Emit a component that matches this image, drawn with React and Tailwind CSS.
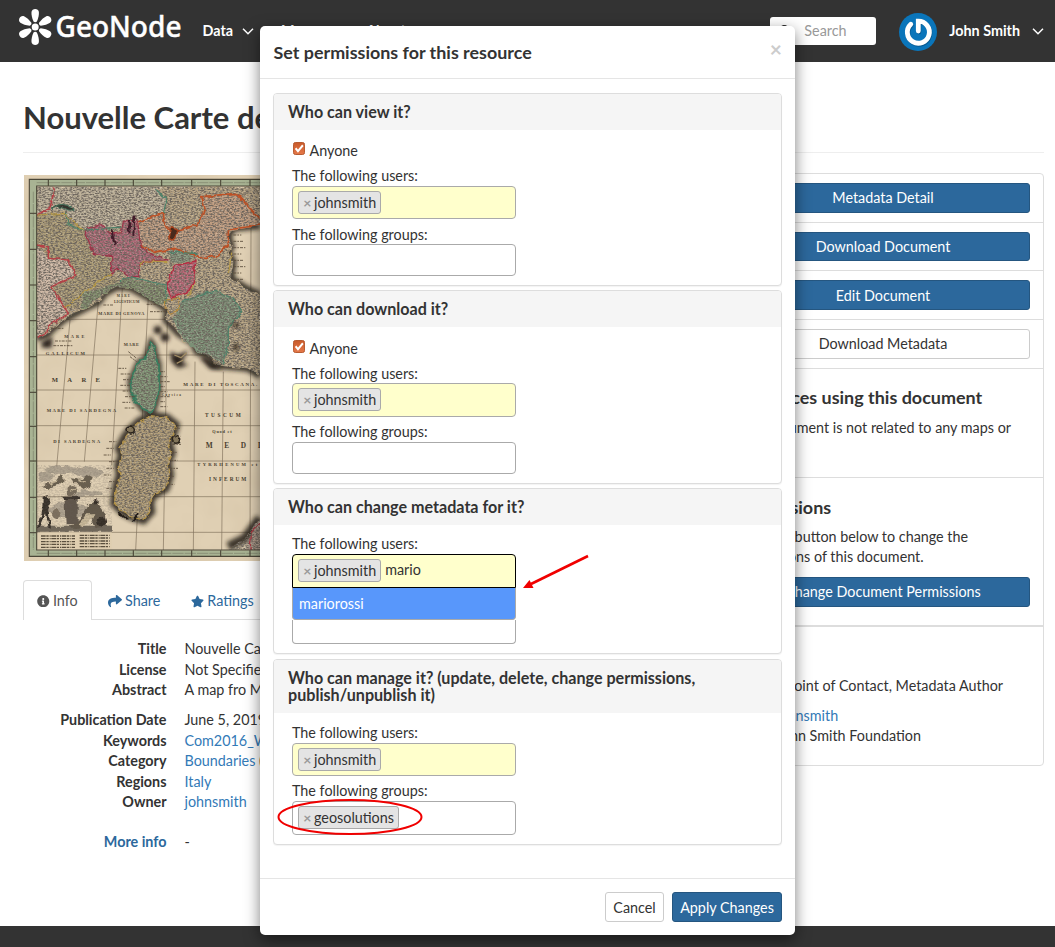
import React from "react";
import { FaInfoCircle, FaShare, FaStar, FaSearch } from "react-icons/fa";

const Chevron = () => (
  <svg className="h-[7px] w-[12px]" viewBox="0 0 12 7" fill="none" stroke="#fff" strokeWidth="1.5">
    <path d="M1 .8 6 5.8 11 .8" />
  </svg>
);

function Logo() {
  return (
    <svg className="ml-[17px] h-[40px] w-[170px] shrink-0" viewBox="17 7 170 40" fill="#fff">
      {[0, 60, 120, 180, 240, 300].map((a) => (
        <path
          key={a}
          transform={`rotate(${a} 35.2 27)`}
          d="M33.5 21.6C32 18 31.3 15 31.5 12C31.9 8 38.5 8 38.9 12C39.1 15 38.4 18 36.9 21.6C36 22.6 34.4 22.6 33.5 21.6Z"
        />
      ))}
      <circle cx="35.2" cy="27" r="3.5" />
      <text x="55.5" y="37.3" fontFamily="'Noto Sans', sans-serif" fontWeight="500" stroke="#fff" strokeWidth=".4" fontSize="28.5" textLength="126" lengthAdjust="spacingAndGlyphs">
        GeoNode
      </text>
    </svg>
  );
}

function Avatar() {
  return (
    <svg className="h-[38px] w-[38px]" viewBox="0 0 38 38" fill="none">
      <circle cx="19" cy="19" r="19" fill="#0a75ba" />
      <g strokeLinecap="round" strokeWidth="4.8">
        <path d="M11.8 11.2A11 11 0 1 0 19.3 8.2V18" stroke="#075a92" transform="translate(.6 1)" />
        <path d="M11.8 11.2A11 11 0 1 0 19.3 8.2V18" stroke="#fff" />
      </g>
    </svg>
  );
}

const NORTH =
  "M65 65H735V182L655 190 640 212 650 245 640 262 655 290 648 340 690 368 735 390V632L700 610 640 605 600 600 585 575 545 560 535 535 505 528 490 505 475 480 452 465 458 435 420 410 385 390 345 368 305 366 270 385 250 412 215 428 185 438 150 462 115 490 95 510 65 520Z";
const CORSICA =
  "M408 530 418 545 420 562 432 600 432 650 430 690 420 725 408 745 385 735 365 712 352 685 345 650 360 615 372 590 392 580Z";
const SARDINIA =
  "M345 795 375 768 410 752 455 758 482 780 475 805 460 830 470 865 458 890 465 930 452 970 415 990 405 1010 408 1040 385 1065 350 1055 322 1040 298 1015 305 960 315 930 310 900 322 870 312 850 330 815Z";
const VERT = [
  "M165 465 125 905", "M250 410 208 890", "M322 370 290 900", "M400 395 362 1155",
  "M457 460 445 1155", "M540 590 535 1155", "M625 620 620 1155", "M708 190 705 1155",
];
const LABELS = [
  [305, 396, 10, 40, "MARE"], [297, 414, 11, 76, "LIGUSTICUM"], [250, 450, 13, 138, "MARE DI GENOVA"],
  [148, 518, 13, 60, "MARE"], [92, 571, 14, 118, "GALLICUM"], [326, 542, 13, 46, "MARE"],
  [110, 651, 20, 145, "MARE"], [95, 740, 14, 208, "MARE DI SARDEGNA"], [115, 834, 14, 140, "DI SARDEGNA"],
  [505, 664, 15, 222, "MARE DI TOSCANA."], [570, 756, 16, 107, "TUSCUM"], [592, 804, 13, 58, "Quod et"],
  [572, 850, 22, 165, "MEDI"], [547, 902, 14, 180, "TYRRHENUM et"], [582, 947, 16, 112, "INFERUM"],
  [440, 692, 10, 58, "Corsica"],
];

function MapImage() {
  return (
    <svg className="block h-[386px] w-[720px]" viewBox="27 30 2160 1158">
      <defs>
        <filter id="ink" x="0" y="0" width="100%" height="100%">
          <feTurbulence type="fractalNoise" baseFrequency="0.14 0.24" numOctaves="2" seed="8" />
          <feColorMatrix values="0 0 0 0 .14  0 0 0 0 .12  0 0 0 0 .1  3.4 0 0 0 -1.3" />
        </filter>
        <filter id="fleck" x="0" y="0" width="100%" height="100%">
          <feTurbulence type="fractalNoise" baseFrequency="0.16 0.26" numOctaves="2" seed="21" />
          <feColorMatrix values="0 0 0 0 .9  0 0 0 0 .84  0 0 0 0 .74  0 3.2 0 0 -1.6" />
        </filter>
        <filter id="paper" x="0" y="0" width="100%" height="100%">
          <feTurbulence type="fractalNoise" baseFrequency="0.008" numOctaves="3" seed="3" />
          <feColorMatrix values="0 0 0 0 .5  0 0 0 0 .4  0 0 0 0 .26  .4 0 0 0 -.17" />
        </filter>
        <filter id="rough" x="-10%" y="-10%" width="120%" height="120%">
          <feTurbulence type="fractalNoise" baseFrequency="0.05" numOctaves="2" result="n" />
          <feDisplacementMap in="SourceGraphic" in2="n" scale="16" xChannelSelector="R" yChannelSelector="G" />
        </filter>
        <filter id="soft" x="-20%" y="-20%" width="140%" height="140%">
          <feGaussianBlur stdDeviation="6" />
        </filter>
        <clipPath id="land">
          <path d={NORTH} /><path d={CORSICA} /><path d={SARDINIA} />
          <path d="M720 1075 735 1060V1155H640L665 1135 690 1120Z" />
        </clipPath>
        <clipPath id="sheet"><rect x="65" y="63" width="690" height="1092" /></clipPath>
      </defs>
      <rect x="27" y="30" width="2160" height="1158" fill="#e0d0b4" />
      <rect x="27" y="30" width="760" height="1158" filter="url(#paper)" />
      <g stroke="#80715c" strokeWidth="2" fill="none">
        {VERT.map((d) => <path key={d} d={d} />)}
        {[463, 570, 675, 782, 888, 995, 1102].map((y) => <path key={y} d={`M65 ${y}H760`} />)}
      </g>
      <g clipPath="url(#sheet)">
        <g filter="url(#soft)" stroke="#211b14" fill="none" strokeWidth="20" opacity=".85">
          <path d="M65 520 95 510 115 490 150 462 215 428 250 412 270 385 305 366 345 368 385 390 420 410 458 435 452 465 490 505 535 535 545 560 585 575 600 600 700 610 735 632" />
          <path d="M735 182 655 190 640 212 650 245 640 262 655 290 648 340 690 368 735 390" />
          <path d={CORSICA} strokeWidth="16" /><path d={SARDINIA} strokeWidth="25" />
          <path d="M640 1145 690 1120 735 1060" strokeWidth="28" />
        </g>
        <g filter="url(#rough)">
          <path d={NORTH} fill="#b8a584" />
          <path d="M65 65H420L455 105 445 145 370 170 320 190 205 195 160 180 150 140 110 135 65 150Z" fill="#bdb199" />
          <path d="M65 240 100 280 155 285 185 330 110 365 160 440 65 520Z" fill="#ceb8a5" />
          <path d="M65 150 145 145 205 195 235 265 290 275 290 325 315 350 205 385 195 430 150 430 110 365 185 330 155 285 100 280 65 240Z" fill="#ac9c76" />
          <path d="M370 170 445 145 470 190 545 180 570 130 560 95 665 85 735 150V182L640 200 645 235 605 275 560 278 480 250 415 262 375 235Z" fill="#c09d80" />
          <path d="M207 197 255 175 285 205 320 200 325 165 368 168 375 235 400 265 460 285 390 288 370 305 372 335 340 335 310 310 290 325 290 275 235 265Z" fill="#ad6876" />
          <path d="M475 303 543 288 535 350 515 385 470 398 455 365Z" fill="#b96777" />
          <path d="M205 385 315 350 345 335 370 350 450 360 455 410 430 420 385 390 345 368 305 366 270 385 215 428 195 430Z" fill="#7f8d6b" />
          <path d="M460 262 480 250 545 265 520 290 465 290Z" fill="#83937a" />
          <path d="M500 410 545 385 600 375 655 400 680 440 640 490 640 550 625 595 585 575 545 560 490 505 475 460Z" fill="#7c9076" />
          <path d={CORSICA} fill="#7f9475" />
          <path d={SARDINIA} fill="#b09c76" />
          <path d="M720 1075 745 1060V1155H690L705 1120Z" fill="#ab9686" />
        </g>
        <g clipPath="url(#land)">
          <rect x="65" y="65" width="700" height="1100" filter="url(#ink)" opacity=".92" />
          <rect x="65" y="65" width="700" height="1100" filter="url(#fleck)" opacity=".32" />
        </g>
        <g filter="url(#rough)" fill="none" strokeWidth="4.5" strokeLinejoin="round">
          <path d="M118 70 105 130 65 148M65 240 100 245V280L155 285 185 330 110 365 150 430 160 445 100 485 95 505 65 520" stroke="#b43f45" />
          <path d="M370 170 445 145 450 180 470 200 545 180 570 130 560 95 665 85 700 125 735 160M735 180 640 195 640 240 600 275 560 278 480 250 415 262 380 240" stroke="#bd5126" strokeWidth="5" />
          <path d="M207 197 255 175 285 205 320 200 325 165 368 168 375 235 400 265 460 285 390 288 370 305 372 335 340 335 310 310 290 325 290 275 235 265Z" stroke="#9c3347" strokeWidth="3.5" />
          <path d="M475 303 543 288 535 350 515 385 470 398 455 365Z" stroke="#b32e42" />
          <path d="M420 70 455 105 445 145M320 190 205 195 160 180 150 140M315 350 345 335 450 360 455 410M460 262 545 265M500 410 600 375 655 400 680 440 640 490 640 550 625 595" stroke="#4c8169" strokeWidth="3.5" />
          <path d="M65 150 145 145 205 195M290 325 210 380 150 430M650 260 640 330M540 350 520 390M372 305 385 288 460 290" stroke="#b59844" strokeWidth="3.5" />
          <path d={CORSICA} stroke="#387c5e" strokeWidth="5" />
          <path d={SARDINIA} stroke="#b1924a" strokeWidth="4" strokeDasharray="14 6" />
          <path d="M452 405 490 400 495 435 465 445 450 430Z" stroke="#b98b3b" strokeWidth="3" />
          <path d="M110 130Q140 105 178 132Q165 140 145 130T110 135Z" fill="#34362e" stroke="#47725c" strokeWidth="3" />
          <path d="M470 185 490 195 475 228 462 220Z" fill="#4a2a1a" stroke="#a7431e" />
          <path d="M290 195 300 240M345 165 340 205M358 155 355 210" stroke="#421f29" strokeWidth="6" />
          <path d="M705 1155 710 1100 740 1070" stroke="#a53a43" strokeWidth="4" />
          <path d="M310 1040Q320 1065 340 1060M355 1070 370 1045" stroke="#211b15" strokeWidth="5" />
          <ellipse cx="347" cy="795" rx="11" ry="9" fill="#83755a" stroke="#2b241a" />
          <ellipse cx="483" cy="823" rx="11" ry="12" fill="#83755a" stroke="#2b241a" />
        </g>
        <g fill="#2b241a" filter="url(#soft)">
          <circle cx="428" cy="495" r="12" /><circle cx="450" cy="517" r="13" />
          <path d="M465 560 490 570 520 555 500 590 520 600 490 610 470 590ZM80 530 112 515 110 548 80 548ZM555 580 570 575 625 612 585 612Z" />
          <circle cx="663" cy="480" r="8" /><circle cx="663" cy="546" r="9" />
        </g>
        <path d="M478 570 498 578 515 563M485 595 505 585" stroke="#a08b63" strokeWidth="4" fill="none" />
        <g stroke="#5a4d3b" strokeWidth="2.6" strokeDasharray="9 3 5 3">
          {[0, 1, 2, 3, 4, 5, 6, 7].map((i) => (
            <path key={i} d={`M${310 + i * 2 + (i % 3) * 5} ${610 + i * 17}h${24 + (i % 2) * 8}M436 ${620 + i * 15}h${14 + (i % 3) * 7}M655 ${210 + i * 19}h${24 + (i % 3) * 6}M${282 - (i % 3) * 8} ${830 + i * 20}h22M${478 - i * 3} ${790 + i * 24}h${16 + (i % 3) * 5}`} />
          ))}
          <path d="M108 490h40M120 528h50M115 542h58M265 420h30M405 440h45M395 418h35M340 560l25 20M345 575l20 15" />
        </g>
        <g filter="url(#rough)">
          <g fill="#9b9080" opacity=".7">
            <ellipse cx="145" cy="915" rx="58" ry="12" /><ellipse cx="225" cy="922" rx="42" ry="16" />
            <ellipse cx="92" cy="935" rx="25" ry="14" /><ellipse cx="215" cy="985" rx="48" ry="9" />
            <ellipse cx="160" cy="1035" rx="60" ry="22" />
          </g>
          <path d="M68 1082H290V1100H68Z" fill="#71675a" />
          <path d="M148 1000H188V1078H152Z" fill="#61574b" />
          <path d="M143 992H195V1002H143Z" fill="#3d362e" />
          <circle cx="170" cy="976" r="16" fill="#796d5c" />
          <path d="M83 995 98 990 104 1020 100 1035 108 1088 100 1085 93 1045 75 1088 69 1085 82 1035Z" fill="#39322b" />
          <path d="M165 1088 200 1058 215 1025 240 1002 255 1030 270 1050 272 1085 240 1088 225 1060 190 1088Z" fill="#62584a" />
          <path d="M190 1080 220 1045 238 1045 232 1060 205 1084Z" fill="#c8b899" />
          <circle cx="240" cy="1010" r="8" fill="#352d25" />
          <ellipse cx="260" cy="1070" rx="13" ry="15" fill="#352d25" />
          <ellipse cx="123" cy="1045" rx="13" ry="16" fill="#7e715e" />
          <path d="M80 970 105 950 118 955 135 930 150 945 130 960 110 965 100 975ZM168 940 195 945 215 930 233 940 225 965 205 975 190 955 175 955Z" fill="#6b604f" />
          <path d="M190 946 213 952M105 958 128 948M180 970 165 978" stroke="#c8b899" strokeWidth="5" />
        </g>
        <g opacity=".2"><rect x="68" y="900" width="222" height="200" filter="url(#ink)" /></g>
        <rect x="68" y="1102" width="222" height="53" fill="#dfceb0" />
        <g stroke="#5b503f" strokeWidth="4" strokeDasharray="14 2 7 3 3 2">
          {[1113, 1121, 1130, 1138, 1147].map((y) => <path key={y} d={`M78 ${y}H180M194 ${y - 2}H284`} />)}
        </g>
      </g>
      <rect x="45" y="43" width="2120" height="20" fill="#a8b393" />
      <rect x="45" y="43" width="20" height="1130" fill="#a8b393" />
      <rect x="45" y="1156" width="2120" height="19" fill="#a8b393" />
      <g fill="none" stroke="#4b4738" strokeWidth="3.4">
        <path d="M2165 43H43V1174H2165M2165 63H65V1155H2165" />
        <path d="M55 80V1155M65 53H760M65 1165H760" strokeWidth="1.5" strokeDasharray="34 3" opacity=".6" />
        {[145, 253, 360, 467, 575, 682, 784, 888, 997, 1103].map((y) => <path key={y} d={`M45 ${y}H65`} />)}
        {[100, 185, 270, 355, 440, 530, 617, 705].map((x) => <path key={x} d={`M${x} 43V63M${x} 1156V1175`} />)}
      </g>
      <g fill="#4a3f30" fontFamily="'Liberation Serif', serif" fontWeight="700">
        {LABELS.map(([x, y, s, w, t]) => (
          <text key={`${x}-${y}`} x={x} y={y} fontSize={s} textLength={w}>{t}</text>
        ))}
      </g>
    </svg>
  );
}

const Tag = ({ children }) => (
  <span className="inline-flex h-[23px] items-center rounded-[3px] border border-[#aaa] bg-[#e4e4e4] pl-[4px] pr-[4px] leading-[21px]">
    <span className="mr-[2.5px] w-[8.5px] text-center text-[14px] font-bold leading-[20px] text-[#999]">×</span>
    {children}
  </span>
);

function Select({ tag, typed, h, open }) {
  const tone = open
    ? "rounded-t-[4px] border-black bg-[#ffffcc]"
    : tag === "johnsmith"
      ? "rounded-[4px] border-[#aaa] bg-[#ffffcc]"
      : "rounded-[4px] border-[#aaa] bg-white";
  return (
    <div className={`flex w-[224px] items-start border pl-[5px] pt-[4px] ${h} ${tone}`}>
      {tag && <Tag>{tag}</Tag>}
      {typed && <span className="ml-[4px] leading-[22px]">{typed}</span>}
    </div>
  );
}

function Panel({ title, className, headClass, children }) {
  return (
    <section className={`shrink-0 overflow-hidden rounded-[4px] border border-[#ddd] bg-white shadow-[0_1px_1px_rgba(0,0,0,.05)] ${className}`}>
      <h4 className={`bg-[#f5f5f5] pl-[14px] pt-[9px] text-[16.12px] font-bold ${headClass}`}>{title}</h4>
      <div className="pl-[18px]">{children}</div>
    </section>
  );
}

const Anyone = () => (
  <div className="flex h-[35px] items-end pb-[4px]">
    <svg className="mb-[6px] ml-px mr-[4.5px] h-[13px] w-[12px]" viewBox="0 0 13 13" preserveAspectRatio="none">
      <defs>
        <linearGradient id="check" x2="0" y2="1">
          <stop offset="0" stopColor="#c95a2a" />
          <stop offset="1" stopColor="#e5794a" />
        </linearGradient>
      </defs>
      <rect x=".5" y=".5" width="12" height="12" rx="2" fill="url(#check)" stroke="#b5572d" />
      <path d="M2.8 6.2 5.4 9.2 10.7 3.3" fill="none" stroke="#fff" strokeWidth="2.1" />
    </svg>
    <span className="leading-[21px]">Anyone</span>
  </div>
);

const Label = ({ h, children }) => <div className={`flex items-end leading-[20px] ${h}`}>{children}</div>;

function Modal() {
  return (
    <div className="absolute left-[260px] top-[26px] flex h-[909px] w-[535px] flex-col rounded-[5px] bg-white shadow-[0_5px_15px_rgba(0,0,0,.5)]">
      <header className="flex h-[53px] shrink-0 items-center justify-between border-b border-[#e5e5e5] pl-[13.5px] pr-[13px]">
        <h3 className="text-[17.9px] font-bold leading-[24px]">Set permissions for this resource</h3>
        <span className="mt-[-6px] text-[21px] font-bold leading-[22px] text-[#ccc]">×</span>
      </header>
      <div className="flex h-[799px] shrink-0 flex-col gap-[4px] px-[13px] pt-[14px]">
        <Panel title="Who can view it?" className="h-[193px]" headClass="h-[36px] leading-[18px]">
          <Anyone />
          <Label h="h-[21px]">The following users:</Label>
          <Select tag="johnsmith" h="h-[33px]" />
          <Label h="h-[25px] translate-y-px">The following groups:</Label>
          <Select h="h-[32px]" />
        </Panel>
        <Panel title="Who can download it?" className="h-[194px]" headClass="h-[36px] leading-[18px]">
          <div className="h-[36px] pt-px"><Anyone /></div>
          <Label h="h-[20px] translate-y-px">The following users:</Label>
          <Select tag="johnsmith" h="h-[34px]" />
          <Label h="h-[25px]">The following groups:</Label>
          <Select h="h-[32px]" />
        </Panel>
        <Panel title="Who can change metadata for it?" className="h-[166px]" headClass="h-[36px] leading-[18px]">
          <Label h="h-[29px]">The following users:</Label>
          <Select tag="johnsmith" typed="mario" h="h-[34px]" open />
          <div className="h-[32px] w-[224px] rounded-b-[4px] border border-t-0 border-[#aaa] bg-[#5897fb] pl-[6px] leading-[31px] text-white">mariorossi</div>
          <div className="h-[24px] w-[224px] rounded-b-[4px] border border-t-0 border-[#aaa] bg-white" />
        </Panel>
        <Panel title="Who can manage it? (update, delete, change permissions, publish/unpublish it)" className="mt-px h-[186px]" headClass="h-[53px] pr-[60px] leading-[17px]">
          <Label h="h-[30px]">The following users:</Label>
          <Select tag="johnsmith" h="h-[33px]" />
          <Label h="h-[25px]">The following groups:</Label>
          <Select tag="geosolutions" h="h-[34px]" />
        </Panel>
      </div>
      <footer className="flex flex-1 items-start justify-end gap-[8px] border-t border-[#e5e5e5] pr-[13px] pt-[13px]">
        <button className="h-[30px] w-[59px] rounded-[3px] border border-[#ccc] bg-white pt-px">Cancel</button>
        <button className="h-[30px] w-[110px] rounded-[3px] border border-[#255680] bg-[#2c689c] pt-px text-white">Apply Changes</button>
      </footer>
      <svg className="pointer-events-none absolute left-0 top-0 h-[909px] w-[535px]" viewBox="260 26 535 909" fill="none" stroke="#f00000" strokeWidth="2">
        <path d="M588 556 531 584" strokeWidth="2.6" />
        <path d="M523 588 529.5 580 533.5 588Z" fill="#f00000" stroke="none" />
        <ellipse cx="350" cy="817" rx="71.5" ry="17" />
      </svg>
    </div>
  );
}

const DETAILS = [
  ["Title", "Nouvelle Carte", "h-[21px]"],
  ["License", "Not Specified", "h-[20px]"],
  ["Abstract", "A map fro Mario", "h-[30px]"],
  ["Publication Date", "June 5, 2019", "h-[21px]"],
  ["Keywords", "Com2016_WGS", "h-[20px]", true],
  ["Category", "Boundaries", "h-[21px]", true],
  ["Regions", "Italy", "h-[20px]", true],
  ["Owner", "johnsmith", "h-[40px]", true],
  ["More info", "-", "h-[20px]"],
];

const SideButton = ({ children, className = "" }) => (
  <button className={`block w-full rounded-[3px] border ${className || "h-[30px] border-[#255680] bg-[#2c689c] text-white"}`}>{children}</button>
);

export default function App() {
  return (
    <div className="relative flex h-[947px] w-[1055px] flex-col overflow-hidden bg-white font-['Lato',sans-serif] text-[14.35px] leading-[20px] text-[#333]">
      <nav className="flex h-[62px] shrink-0 items-center bg-[#333] pb-[8px] text-white">
        <Logo />
        <span className="ml-[15.5px] mt-[8px] flex items-center gap-[9px] font-bold">Data <Chevron /></span>
        <span className="ml-[27px] mt-[8px] font-bold">Maps</span>
        <span className="ml-[50px] mt-[8px] font-bold">About</span>
        <div className="ml-auto mt-[8px] flex h-[28px] w-[106px] items-center rounded-[3px] bg-white text-[#999]">
          <FaSearch className="ml-[9px] mr-[12px] text-[13px] text-[#333]" />
          Search
        </div>
        <div className="ml-[23px] mr-[12px] mt-[9px]"><Avatar /></div>
        <span className="mr-[11px] mt-[8px] flex items-center gap-[12px] font-bold">John Smith <Chevron /></span>
      </nav>
      <main className="flex-1 pl-[23px] pr-[11px]">
        <h1 className="h-[91px] overflow-hidden whitespace-nowrap border-b border-[#eee] pt-[35px] text-[31px] font-bold leading-[40px]">Nouvelle Carte de</h1>
        <div className="flex justify-between">
          <div className="mt-[22px] w-[690px]">
            <div className="ml-px w-[680px] overflow-hidden"><MapImage /></div>
            <div className="mt-[19px] flex h-[40px] items-start border-b border-[#ddd] text-[#2c689c]">
              <div className="flex h-[40px] w-[69px] items-center justify-center gap-[3px] rounded-t-[4px] border border-b-0 border-[#ddd] bg-white pt-px text-[#555]"><FaInfoCircle className="text-[12.5px]" />Info</div>
              <div className="ml-[16px] flex h-[40px] items-center gap-[3px] pt-[2px]"><FaShare className="text-[14px]" />Share</div>
              <div className="ml-[31px] flex h-[40px] items-center gap-[3px] pt-[2px]"><FaStar className="text-[13px]" />Ratings</div>
            </div>
            <dl className="mt-[19px]">
              {DETAILS.map(([k, v, h, link]) => (
                <div key={k} className={`flex ${h}`}>
                  <dt className={k === "More info" ? "w-[143.5px] text-right font-bold text-[#2c689c]" : "w-[143.5px] text-right font-bold"}>{k}</dt>
                  <dd className={link ? "ml-[18px] text-[#337ab7]" : "ml-[18px]"}>{v}{k === "Category" && <span className="text-[#333]"> (</span>}</dd>
                </div>
              ))}
            </dl>
          </div>
          <aside className="mt-[20px] h-[593px] w-[322px] rounded-[4px] border border-[#ddd]">
            <div className="h-[49px] border-b border-[#ddd] px-[13px] pt-[9px]"><SideButton>Metadata Detail</SideButton></div>
            <div className="h-[48px] border-b border-[#ddd] px-[13px] pt-[9px]"><SideButton className="h-[29px] border-[#255680] bg-[#2c689c] text-white">Download Document</SideButton></div>
            <div className="h-[49px] border-b border-[#ddd] px-[13px] pt-[9px]"><SideButton className="h-[30px] border-[#255680] bg-[#2c689c] pt-[2px] text-white">Edit Document</SideButton></div>
            <div className="h-[49px] border-b border-[#ddd] px-[13px] pt-[9px]"><SideButton className="h-[30px] border-[#ccc] bg-white">Download Metadata</SideButton></div>
            <div className="h-[109px] border-b border-[#ddd] px-[13px] pt-[17px]">
              <h4 className="text-[17.95px] font-bold leading-[22px]">Resources using this document</h4>
              <p className="mt-[10px]">This document is not related to any maps or</p>
            </div>
            <div className="h-[149px] border-b-2 border-[#ddd] px-[13px] pt-[18px]">
              <h4 className="text-[17.95px] font-bold leading-[22px]">Permissions</h4>
              <p className="mt-[9px]">Click the button below to change the<br />permissions of this document.</p>
              <div className="mt-[10px]"><SideButton>Change Document Permissions</SideButton></div>
            </div>
            <div className="pl-[53px] pt-[49px]">
              <p className="pl-[10px]">Point of Contact, Metadata Author</p>
              <p className="mt-[10px] text-[#337ab7]">johnsmith</p>
              <p>John Smith Foundation</p>
            </div>
          </aside>
        </div>
      </main>
      <div className="h-[21px] shrink-0 bg-[#333]" />
      <Modal />
    </div>
  );
}
